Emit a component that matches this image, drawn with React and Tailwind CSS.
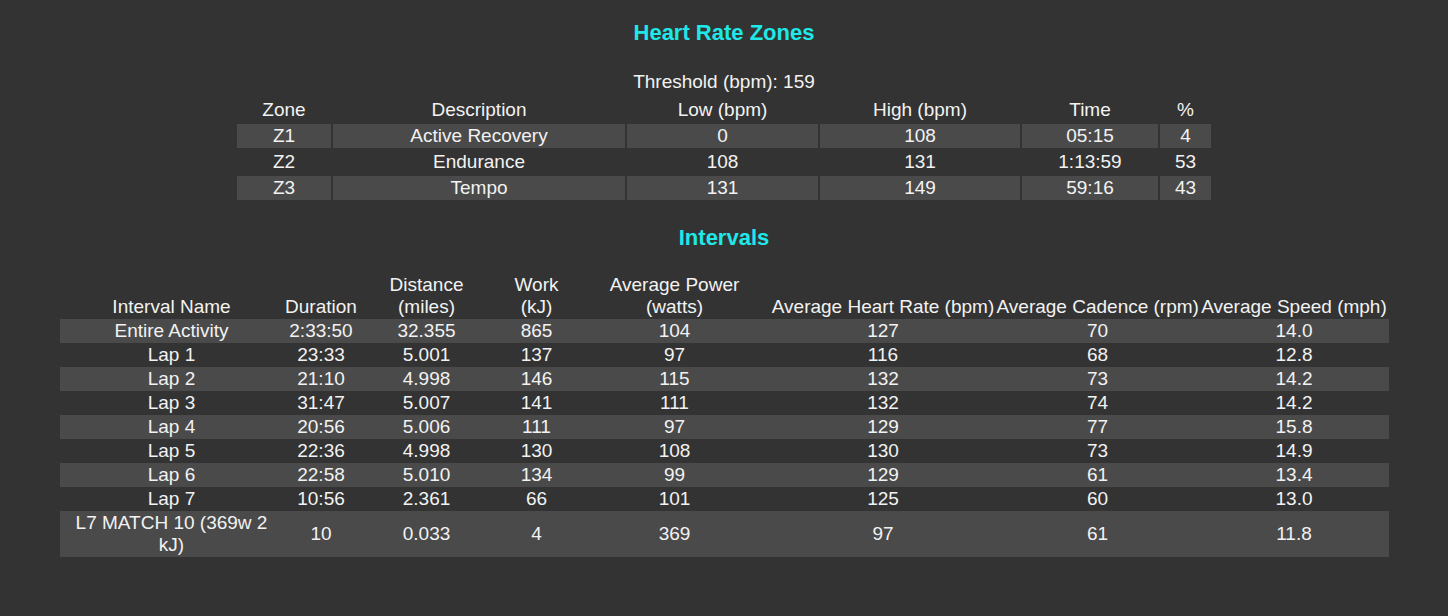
const zones = [
  ['Z1', 'Active Recovery', '0', '108', '05:15', '4'],
  ['Z2', 'Endurance', '108', '131', '1:13:59', '53'],
  ['Z3', 'Tempo', '131', '149', '59:16', '43'],
]

const intervals = [
  ['Entire Activity', '2:33:50', '32.355', '865', '104', '127', '70', '14.0'],
  ['Lap 1', '23:33', '5.001', '137', '97', '116', '68', '12.8'],
  ['Lap 2', '21:10', '4.998', '146', '115', '132', '73', '14.2'],
  ['Lap 3', '31:47', '5.007', '141', '111', '132', '74', '14.2'],
  ['Lap 4', '20:56', '5.006', '111', '97', '129', '77', '15.8'],
  ['Lap 5', '22:36', '4.998', '130', '108', '130', '73', '14.9'],
  ['Lap 6', '22:58', '5.010', '134', '99', '129', '61', '13.4'],
  ['Lap 7', '10:56', '2.361', '66', '101', '125', '60', '13.0'],
  ['L7 MATCH 10 (369w 2 kJ)', '10', '0.033', '4', '369', '97', '61', '11.8'],
]

export default function App() {
  return (
    <div className="min-h-screen bg-[#333333] text-[#f2f2f2] font-['Liberation_Sans',Arial,sans-serif] text-[19px] leading-[22px] pt-[21px]">
      {/* Heart rate zones */}
      <h2 className="text-center text-[22px] leading-[24px] font-bold text-[#1ee8e8]">Heart Rate Zones</h2>
      <table className="mx-auto mt-[25px] w-[978px] table-fixed border-separate border-spacing-[2px] text-center">
        <caption className="pt-[1px] pb-[3px]">Threshold (bpm): 159</caption>
        <thead>
          <tr>
            <th className="w-[94px] p-[1px] font-normal">Zone</th>
            <th className="w-[292px] p-[1px] font-normal">Description</th>
            <th className="w-[191px] p-[1px] font-normal">Low (bpm)</th>
            <th className="w-[200px] p-[1px] font-normal">High (bpm)</th>
            <th className="w-[136px] p-[1px] font-normal">Time</th>
            <th className="w-[51px] p-[1px] font-normal">%</th>
          </tr>
        </thead>
        <tbody>
          {zones.map((row, i) => (
            <tr key={row[0]} className={i % 2 === 0 ? 'bg-[#4a4a4a]' : ''}>
              {row.map((cell, j) => (
                <td key={j} className="p-[1px]">{cell}</td>
              ))}
            </tr>
          ))}
        </tbody>
      </table>

      {/* Intervals */}
      <h2 className="mt-[24px] text-center text-[22px] leading-[24px] font-bold text-[#1ee8e8]">Intervals</h2>
      <table className="mx-auto mt-[23px] w-[1329px] table-fixed border-collapse text-center">
        <thead>
          <tr className="align-bottom">
            <th className="w-[224px] p-[1px] font-normal">Interval Name</th>
            <th className="w-[75px] p-[1px] font-normal">Duration</th>
            <th className="w-[136px] p-[1px] font-normal">Distance<br />(miles)</th>
            <th className="w-[84px] p-[1px] font-normal">Work<br />(kJ)</th>
            <th className="w-[192px] p-[1px] font-normal">Average Power<br />(watts)</th>
            <th className="w-[225px] p-[1px] font-normal whitespace-nowrap">Average Heart Rate (bpm)</th>
            <th className="w-[204px] p-[1px] font-normal whitespace-nowrap">Average Cadence (rpm)</th>
            <th className="w-[189px] p-[1px] font-normal whitespace-nowrap">Average Speed (mph)</th>
          </tr>
        </thead>
        <tbody>
          {intervals.map((row, i) => (
            <tr key={row[0]} className={i % 2 === 0 ? 'bg-[#4a4a4a]' : ''}>
              {row.map((cell, j) => (
                <td key={j} className="p-[1px]">{cell}</td>
              ))}
            </tr>
          ))}
        </tbody>
      </table>
    </div>
  )
}
